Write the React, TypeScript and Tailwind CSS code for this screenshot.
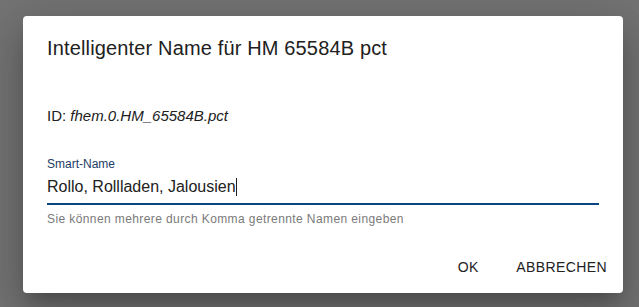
export default function App() {
  return (
    <div
      className="w-[639px] h-[307px] bg-[#737373] pt-4 pl-[23px]"
      style={{ fontFamily: '"Liberation Sans", Arial, sans-serif' }}
    >
      {/* Dialog */}
      <div className="w-[600px] h-[277px] bg-white rounded shadow-[0_11px_15px_-7px_rgba(0,0,0,0.2),0_24px_38px_3px_rgba(0,0,0,0.14),0_9px_46px_8px_rgba(0,0,0,0.12)] flex flex-col">
        <h2 className="px-6 py-4 text-[20px] leading-8 tracking-[0.15px] text-[#212121]">
          Intelligenter Name für HM 65584B pct
        </h2>

        <div className="px-6 pt-6 flex flex-col">
          <p className="text-[15px] leading-6 text-[#212121]">
            ID: <span className="italic">fhem.0.HM_65584B.pct</span>
          </p>

          {/* Smart-Name field */}
          <div className="mt-7 flex flex-col">
            <label className="text-[12px] leading-4 text-[#1d3c66]">Smart-Name</label>
            <div className="mt-[3px] pb-1 border-b-2 border-[#0b467e] flex items-center">
              <span className="text-[16px] leading-6 text-[#212121]">
                Rollo, Rollladen, Jalousien
              </span>
              <span className="w-px h-[18px] bg-[#212121]" />
            </div>
            <p className="mt-[6px] text-[12px] leading-4 tracking-[0.4px] text-[#7a7a7a]">
              Sie können mehrere durch Komma getrennte Namen eingeben
            </p>
          </div>
        </div>

        {/* Actions */}
        <div className="mt-auto p-2 flex justify-end gap-2">
          <button className="min-w-16 h-9 px-2 text-[14px] tracking-[0.4px] uppercase text-[#222]">
            OK
          </button>
          <button className="min-w-16 h-9 px-2 text-[14px] tracking-[0.4px] uppercase text-[#222]">
            Abbrechen
          </button>
        </div>
      </div>
    </div>
  );
}
